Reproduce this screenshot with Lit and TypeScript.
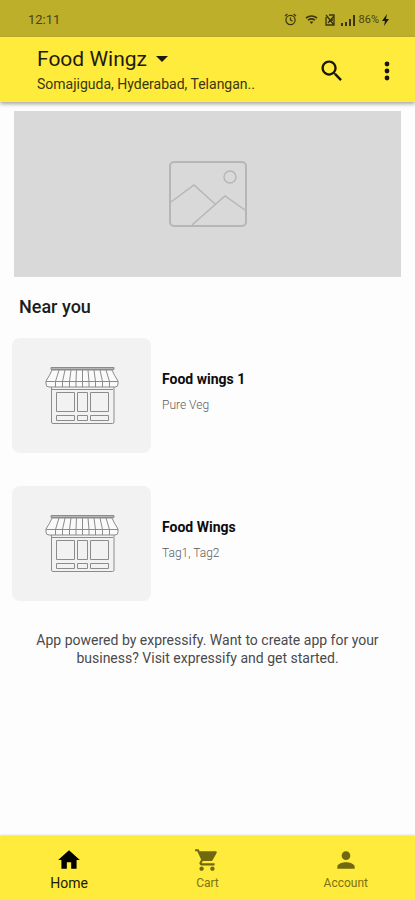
import { LitElement, html, css, svg } from "lit";
import { customElement, property } from "lit/decorators.js";

interface Shop {
  name: string;
  tags: string;
}

const SHOPS: Shop[] = [
  { name: "Food wings 1", tags: "Pure Veg" },
  { name: "Food Wings", tags: "Tag1, Tag2" },
];

const TABS = [
  { label: "Home", path: "M10 20v-6h4v6h5v-8h3L12 3 2 12h3v8z" },
  {
    label: "Cart",
    path: "M7 18c-1.1 0-1.99.9-1.99 2S5.9 22 7 22s2-.9 2-2-.9-2-2-2zM1 2v2h2l3.6 7.59-1.35 2.45c-.16.28-.25.61-.25.96 0 1.1.9 2 2 2h12v-2H7.42c-.14 0-.25-.11-.25-.25l.03-.12.9-1.63h7.45c.75 0 1.41-.41 1.75-1.03l3.58-6.49c.08-.14.12-.31.12-.48 0-.55-.45-1-1-1H5.21l-.94-2H1zm16 16c-1.1 0-1.99.9-1.99 2s.89 2 1.99 2 2-.9 2-2-.9-2-2-2z",
  },
  {
    label: "Account",
    path: "M12 12c2.21 0 4-1.79 4-4s-1.79-4-4-4-4 1.79-4 4 1.79 4 4 4zm0 2c-2.67 0-8 1.34-8 4v2h16v-2c0-2.66-5.33-4-8-4z",
  },
];

@customElement("status-bar")
export class StatusBar extends LitElement {
  static styles = css`
    :host {
      display: flex;
      align-items: center;
      justify-content: space-between;
      box-sizing: border-box;
      height: 37px;
      padding: 2px 26px 0 28px;
      background: #beaf2a;
      color: #4a4312;
    }
    .time { font-size: 13px; }
    .icons { display: flex; align-items: center; }
    .alarm { margin-right: 8px; }
    .wifi { margin-right: 7px; }
    .sim { margin-right: 5px; }
    .signal { margin-right: 3px; }
    .battery { font-size: 11px; margin-right: 3px; }
    .icons svg { display: block; }
  `;
  render() {
    return html`
      <span class="time">12:11</span>
      <div class="icons">
        <svg class="alarm" width="13" height="13" viewBox="0 0 13 13" fill="none" stroke="#3a350e" stroke-width="1.2">
          <circle cx="6.5" cy="7" r="4.6" />
          <path d="M6.5 4.5V7l2 1.3M1 3l2.4-2M12 3L9.6 1" />
        </svg>
        <svg class="wifi" width="13" height="11" viewBox="0 0 13 11" fill="none" stroke="#3a350e" stroke-width="1.6">
          <path d="M1 4Q6.5 0 12 4M3 6.2Q6.5 3.6 10 6.2" />
          <path d="M4.5 7.5h4L6.5 10z" fill="#3a350e" stroke="none" />
        </svg>
        <svg class="sim" width="10" height="12" viewBox="0 0 10 12" fill="none" stroke="#3a350e" stroke-width="1.3">
          <path d="M1 3v8h8V1H4M1 1l8 10M9 2L3 9M4 6h4" />
        </svg>
        <svg class="signal" width="16" height="12" viewBox="0 0 16 12" fill="#3a350e">
          <path d="M1 9h2v3H1zM5 8h2v4H5zM9 5h2v7H9zM13 1h2v11h-2z" />
        </svg>
        <span class="battery">86%</span>
        <svg width="7" height="12" viewBox="0 0 7 12" fill="#1c1a06"><path d="M5 0L0 7h3L2 12l5-7H4z" /></svg>
      </div>
    `;
  }
}

@customElement("shop-card")
export class ShopCard extends LitElement {
  @property({ attribute: false }) shop!: Shop;

  static styles = css`
    :host { display: flex; align-items: center; gap: 11px; }
    .thumb {
      display: flex;
      align-items: center;
      justify-content: center;
      flex: none;
      width: 139px;
      height: 115px;
      border-radius: 8px;
      background: #f2f2f2;
    }
    .info { display: flex; flex-direction: column; gap: 9px; padding-bottom: 9px; }
    .name { margin: 0; font-size: 14px; line-height: 18px; font-weight: 700; color: #0c0c0c; }
    .tags { margin: 0; font-size: 12px; line-height: 16px; font-weight: 300; color: #5c5c5c; }
  `;
  render() {
    const seams = [
      [14, 10.5], [20, 17.5], [26, 24.5], [31.5, 31],
      [37.5, 37.5], [43, 44], [49, 50.5], [55, 57.5], [61, 64.5],
    ];
    return html`
      <div class="thumb">
        <svg width="74" height="60" viewBox="0 0 74 60" fill="none" stroke="#8c8c8c" stroke-width="1">
          <path d="M6 1.5h63v2H6z" fill="#b5b5b5" />
          <path d="M7 4Q5 9 1 15v3q0 3 3 3h66q3 0 3-3v-3Q69 9 67 4z" fill="#fafafa" />
          <path d="M1 15.5h72" />
          ${seams.map(([top, low]) => svg`<path d="M${top} 4L${low} 15.500V21" />`)}
          <path d="M6.5 21v35q0 1.5 1.5 1.5h59.5q1.5 0 1.500-1.5V21M7 23.5h61" />
          <path d="M11.5 26.5h18v19h-18zM32.5 26.5h10v19h-10zM45.5 26.5h18v19h-18z" />
          <path d="M11.5 49.5h18v5h-18zM32.5 49.5h10v5h-10zM45.5 49.5h18v5h-18z" />
        </svg>
      </div>
      <div class="info">
        <h3 class="name">${this.shop.name}</h3>
        <p class="tags">${this.shop.tags}</p>
      </div>
    `;
  }
}

@customElement("app-root")
export class AppRoot extends LitElement {
  static styles = css`
    :host {
      display: flex;
      flex-direction: column;
      min-height: 100vh;
      background: #fdfdfe;
      font-family: Roboto, "Liberation Sans", sans-serif;
      color: #1d1b10;
    }
    button {
      border: 0;
      padding: 0;
      background: none;
      color: inherit;
      font: inherit;
      cursor: pointer;
    }
    svg { display: block; }
    .header {
      display: flex;
      align-items: center;
      box-sizing: border-box;
      height: 65px;
      padding: 2px 16px 0 37px;
      background: #ffeb3b;
      box-shadow: 0 2px 4px rgba(0, 0, 0, 0.35);
    }
    .place { flex: 1; min-width: 0; text-align: left; }
    .title { display: flex; align-items: center; gap: 9px; font-size: 21px; line-height: 26px; }
    .address { display: block; font-size: 14px; line-height: 24px; color: #3b360f; }
    .search { margin-right: 29px; }
    .main { flex: 1; padding: 9px 14px 24px; }
    .banner {
      display: flex;
      align-items: center;
      justify-content: center;
      height: 166px;
      background: #d9d9d9;
    }
    .heading { margin: 18px 5px 19px; font-size: 18px; line-height: 24px; font-weight: 500; color: #1c1c1c; }
    .shops { display: flex; flex-direction: column; gap: 33px; margin-left: -2px; }
    .note { margin: 30px 0 0; font-size: 14px; line-height: 18px; text-align: center; color: #4a4a4a; }
    .tabs { display: flex; height: 64px; background: #ffeb3b; box-shadow: 0 -1px 2px rgba(0, 0, 0, 0.15); }
    .tab {
      flex: 1;
      display: flex;
      flex-direction: column;
      align-items: center;
      padding-top: 11px;
      gap: 1px;
      font-size: 12px;
      line-height: 18px;
      color: #7b7117;
    }
    .tab.active { font-size: 14px; color: #1d1a05; }
    .tab svg { fill: #71680f; }
    .tab.active svg { fill: #000; }
  `;
  render() {
    return html`
      <status-bar></status-bar>
      <header class="header">
        <button class="place">
          <span class="title">
            Food Wingz
            <svg width="12" height="6" viewBox="0 0 12 6" fill="#1d1b10"><path d="M0 0h12L6 6z" /></svg>
          </span>
          <span class="address">Somajiguda, Hyderabad, Telangan..</span>
        </button>
        <button class="search" aria-label="Search">
          <svg width="28" height="28" viewBox="0 0 24 24" fill="#1a1804">
            <path d="M15.5 14h-.79l-.28-.27C15.41 12.59 16 11.11 16 9.5 16 5.91 13.09 3 9.5 3S3 5.91 3 9.5 5.91 16 9.5 16c1.61 0 3.09-.59 4.23-1.57l.27.28v.79l5 4.99L20.49 19l-4.99-5zm-6 0C7.01 14 5 11.99 5 9.5S7.01 5 9.5 5 14 7.01 14 9.5 11.99 14 9.5 14z" />
          </svg>
        </button>
        <button aria-label="More options">
          <svg width="24" height="28" viewBox="0 0 24 28" fill="#1a1804">
            <circle cx="12" cy="7" r="2.4" /><circle cx="12" cy="14" r="2.4" /><circle cx="12" cy="21" r="2.4" />
          </svg>
        </button>
      </header>
      <main class="main">
        <div class="banner">
          <svg width="78" height="66" viewBox="0 0 78 66" fill="none" stroke="#b6b6b6" stroke-width="1.4">
            <rect x="1" y="1" width="76" height="64" rx="4" stroke-width="2" />
            <circle cx="61" cy="16" r="6" />
            <path d="M2 41L25 24L46 43M23 64L56 35L76 49" />
          </svg>
        </div>
        <h2 class="heading">Near you</h2>
        <div class="shops">${SHOPS.map((shop) => html`<shop-card .shop=${shop}></shop-card>`)}</div>
        <p class="note">App powered by expressify. Want to create app for your business? Visit expressify and get started.</p>
      </main>
      <nav class="tabs">
        ${TABS.map(
          (tab, i) => html`
            <button class="tab ${i === 0 ? "active" : ""}">
              <svg width="26" height="26" viewBox="0 0 24 24"><path d=${tab.path} /></svg>
              ${tab.label}
            </button>
          `
        )}
      </nav>
    `;
  }
}
